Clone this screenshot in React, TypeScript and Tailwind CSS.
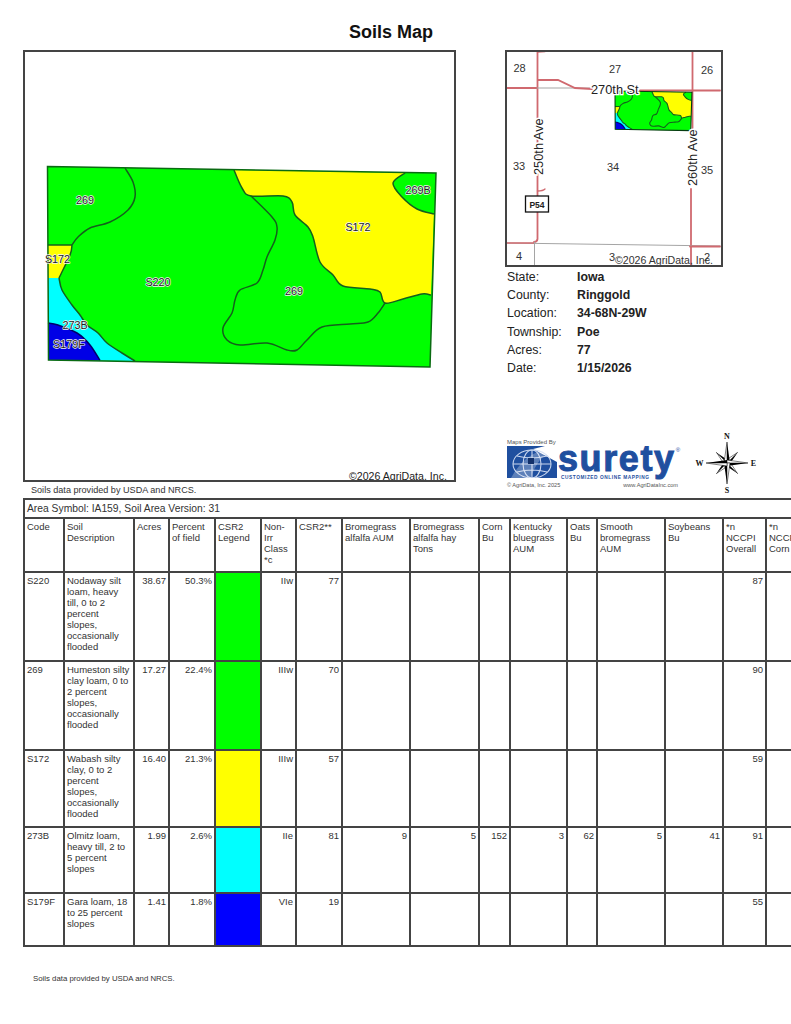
import React from "react";

type P = [number, number];

function smooth(points: P[]): string {
  let d = `M${points[0][0]},${points[0][1]}`;
  for (let i = 0; i < points.length - 1; i++) {
    const p0 = points[Math.max(i - 1, 0)];
    const p1 = points[i];
    const p2 = points[i + 1];
    const p3 = points[Math.min(i + 2, points.length - 1)];
    const c1x = p1[0] + (p2[0] - p0[0]) / 6;
    const c1y = p1[1] + (p2[1] - p0[1]) / 6;
    const c2x = p2[0] - (p3[0] - p1[0]) / 6;
    const c2y = p2[1] - (p3[1] - p1[1]) / 6;
    d += ` C${c1x.toFixed(1)},${c1y.toFixed(1)} ${c2x.toFixed(1)},${c2y.toFixed(1)} ${p2[0]},${p2[1]}`;
  }
  return d;
}

const notch: P[] = [[405, 173], [393, 183], [402, 197], [417, 209], [434, 214]];
const yellowEdge: P[] = [[431, 295], [422, 294], [403, 299], [385, 303], [380, 292], [370, 289], [343, 286], [333, 275], [320, 262], [313, 237], [308, 227], [295, 215], [292, 202], [283, 196], [251, 196], [242, 188], [234, 170]];
const inner: P[] = [[251, 196], [272, 217], [277, 227], [275, 240], [267, 257], [263, 270], [257, 283], [240, 290], [235, 300], [232, 313], [223, 328], [227, 340], [240, 345], [267, 343], [287, 350], [297, 350], [307, 340], [322, 327], [350, 324], [368, 322], [378, 313], [385, 303]];
const leftTop: P[] = [[125, 168], [133, 182], [135, 197], [128, 210], [110, 222], [90, 228], [78, 237], [72, 245]];
const smallYellow: P[] = [[72, 245], [70, 255], [59, 278]];
const cyanEdge: P[] = [[59, 278], [62, 290], [72, 305], [80, 315], [87, 325], [98, 333], [107, 343], [122, 353], [135, 361]];
const blueEdge: P[] = [[48, 323], [58, 325], [77, 333], [90, 345], [100, 360.5]];

function SoilShapes({ sw, outer }: { sw: number; outer: string }) {
  const line = "#14601c";
  return (
    <g>
      <path d="M47.5,166.5 L436,173 L430,367 L48.5,360 Z" fill="#00ff00" />
      <path d={`${smooth(notch)} L431,295 ${smooth(yellowEdge).replace("M", "L")} Z`} fill="#ffff00" />
      <path d="M48,245 L72,245 L70,255 L59,278 L48,278 Z" fill="#ffff00" />
      <path d={`${smooth(cyanEdge)} L48.5,360 L48,278 Z`} fill="#00ffff" />
      <path d={`${smooth(blueEdge)} L48.5,360 Z`} fill="#0000e6" />
      <g fill="none" stroke={line} strokeWidth={sw} strokeLinejoin="round">
        <path d={smooth(notch)} />
        <path d={smooth(yellowEdge)} />
        <path d={smooth(inner)} />
        <path d={smooth(leftTop)} />
        <path d={smooth(smallYellow)} />
        <path d={smooth(cyanEdge)} />
        <path d="M48,245 L72,245" />
      </g>
      <path d={smooth(blueEdge)} fill="none" stroke="#00006a" strokeWidth={sw} />
      <path d="M47.5,166.5 L436,173 L430,367 L48.5,360 Z" fill="none" stroke={outer} strokeWidth={sw} />
    </g>
  );
}

function MainMap() {
  const labels: [string, number, number][] = [
    ["269", 85, 204], ["269B", 418, 194], ["S172", 358, 231], ["S172", 57.5, 263],
    ["S220", 158, 286], ["269", 294, 295], ["273B", 75, 329], ["S179F", 69, 348],
  ];
  return (
    <svg viewBox="25 52 429 428" className="block w-full h-full">
      <SoilShapes sw={1.5} outer="#0a6a12" />
      {labels.map(([t, x, y], i) => (
        <text key={i} x={x} y={y} textAnchor="middle" fontSize="10.8" fill="#222" stroke="#f4f4f4" strokeWidth="1.3" paintOrder="stroke" strokeLinejoin="round" fontFamily="'Liberation Sans', sans-serif">{t}</text>
      ))}
      <text x="349" y="479.5" fontSize="10.6" fill="#222" fontFamily="'Liberation Sans', sans-serif">©2026 AgriData, Inc.</text>
    </svg>
  );
}

function Inset() {
  const red = "#d0696f";
  const grey = "#a5a5a5";
  const sec: [string, number, number][] = [
    ["28", 519.5, 73], ["27", 615, 74], ["26", 707, 75], ["33", 519, 171], ["34", 613, 172],
    ["35", 707, 175], ["4", 519, 261], ["3", 612, 262], ["2", 707, 262],
  ];
  const F = "'Liberation Sans', sans-serif";
  return (
    <svg viewBox="507 53 214 213" className="block w-full h-full">
      <g fill="none" strokeLinecap="round">
        <path d="M537.5,53 L537.5,240 Q537,243 534,243" stroke={red} strokeWidth="1.8" />
        <path d="M537.5,53 L545,52.5" stroke={red} strokeWidth="1.3" />
        <path d="M537.5,192 Q543,192 545,190" stroke={red} strokeWidth="1.3" />
        <path d="M507,89 L537,89" stroke={red} strokeWidth="1.8" />
        <path d="M537,89 L590,89" stroke={grey} strokeWidth="1" />
        <path d="M538,81 L558,81 L575,89 L592,90" stroke={red} strokeWidth="1.8" />
        <path d="M640,91.5 L720,91.5" stroke={red} strokeWidth="1.8" />
        <path d="M692.5,53 L692.5,130" stroke={red} strokeWidth="1.8" />
        <path d="M691,190 L691,266" stroke={red} strokeWidth="1.8" />
        <path d="M507,244 L720,247" stroke={grey} strokeWidth="1" />
        <path d="M507,244 L534,244" stroke={red} strokeWidth="1.3" />
        <path d="M690,247.5 L720,247.5" stroke={red} strokeWidth="1.8" />
        <path d="M534.5,243 L534.5,266" stroke={grey} strokeWidth="1" />
      </g>
      <g transform="translate(605.6,59) scale(0.198)">
        <SoilShapes sw={5.5} outer="#063d10" />
      </g>
      {sec.map(([t, x, y], i) => (
        <text key={i} x={x} y={y} textAnchor="middle" fontSize="11" fill="#333" fontFamily={F}>{t}</text>
      ))}
      <text x="591" y="95" fontSize="12.8" fill="#222" stroke="#fff" strokeWidth="2.5" paintOrder="stroke" fontFamily={F}>270th St</text>
      <text x="0" y="0" transform="translate(543,176) rotate(-90)" fontSize="12.8" fill="#222" stroke="#fff" strokeWidth="3" paintOrder="stroke" fontFamily={F}>250th Ave</text>
      <text x="0" y="0" transform="translate(697,187) rotate(-90)" fontSize="12.8" fill="#222" stroke="#fff" strokeWidth="3" paintOrder="stroke" fontFamily={F}>260th Ave</text>
      <rect x="525.5" y="197" width="23" height="16" fill="#fff" stroke="#111" strokeWidth="1.3" />
      <text x="537" y="208.5" textAnchor="middle" fontSize="8.5" fontWeight="700" fill="#222" fontFamily={F}>P54</text>
      <text x="615" y="265" fontSize="10.6" fill="#333" fontFamily={F}>©2026 AgriData, Inc.</text>
    </svg>
  );
}

function GlobeMark() {
  return (
    <svg viewBox="0 0 50 32" className="block w-[50px] h-[32px] shrink-0">
      <path d="M0,0 L38,0 Q30,2 26,3 L50,16 L50,32 L0,32 Z" fill="#1f4f9f" />
      <path d="M50,0 L50,14 L40,3 Z" fill="#fff" />
      <g fill="none" stroke="#c9d6ee" strokeWidth="1.1">
        <ellipse cx="25" cy="18" rx="19" ry="14" />
        <ellipse cx="25" cy="18" rx="9" ry="14" />
        <path d="M25,4 L25,32 M6,18 L44,18 M10,10 Q25,14 40,10 M10,26 Q25,22 40,26" />
      </g>
      <path d="M4,32 Q18,6 44,2 L50,2 Q30,10 24,32 Z" fill="#fff" opacity="0.28" />
      <rect x="21" y="12" width="6" height="6" fill="#12306a" />
    </svg>
  );
}

function Compass() {
  const pts: [number, number, number, number][] = [];
  const star = (angle: number, r: number, w: number) => {
    const a = (angle * Math.PI) / 180;
    pts.push([Math.sin(a) * r, -Math.cos(a) * r, Math.cos(a) * w, Math.sin(a) * w]);
  };
  [45, 135, 225, 315].forEach((a) => star(a, 15, 3));
  [0, 90, 180, 270].forEach((a) => star(a, 21, 3));
  return (
    <svg viewBox="-32 -30 64 60" className="block w-[64px] h-[60px]">
      {pts.map(([tx, ty, lx, ly], i) => (
        <g key={i}>
          <path d={`M0,0 L${tx},${ty} L${lx},${ly} Z`} fill="#000" />
          <path d={`M0,0 L${tx},${ty} L${-lx},${-ly} Z`} fill="#fff" stroke="#000" strokeWidth="0.5" />
        </g>
      ))}
      <g fontFamily="'Liberation Serif', serif" fontWeight="700" fontSize="8" fill="#111" textAnchor="middle">
        <text x="0" y="-24.5">N</text>
        <text x="0" y="29.5">S</text>
        <text x="-27.5" y="3">W</text>
        <text x="26.5" y="3">E</text>
      </g>
    </svg>
  );
}

const colWidths = [40, 70, 35, 46, 46, 35, 46, 68, 69, 31, 57, 30, 68, 58, 43, 64];
const headers = [
  "Code", "Soil\nDescription", "Acres", "Percent\nof field", "CSR2\nLegend", "Non-\nIrr\nClass\n*c", "CSR2**",
  "Bromegrass\nalfalfa AUM", "Bromegrass\nalfalfa hay\nTons", "Corn\nBu", "Kentucky\nbluegrass\nAUM", "Oats\nBu",
  "Smooth\nbromegrass\nAUM", "Soybeans\nBu", "*n\nNCCPI\nOverall", "*n\nNCCPI\nCorn",
];

type Row = {
  h: string; code: string; desc: string; acres: string; pct: string; swatch: string; cls: string; csr: string;
  extra: string[]; nccpi: string;
};
const rows: Row[] = [
  { h: "h-[89px]", code: "S220", desc: "Nodaway silt\nloam, heavy\ntill, 0 to 2\npercent\nslopes,\noccasionally\nflooded", acres: "38.67", pct: "50.3%", swatch: "bg-[#00ff00]", cls: "IIw", csr: "77", extra: ["", "", "", "", "", "", ""], nccpi: "87" },
  { h: "h-[89px]", code: "269", desc: "Humeston silty\nclay loam, 0 to\n2 percent\nslopes,\noccasionally\nflooded", acres: "17.27", pct: "22.4%", swatch: "bg-[#00ff00]", cls: "IIIw", csr: "70", extra: ["", "", "", "", "", "", ""], nccpi: "90" },
  { h: "h-[77px]", code: "S172", desc: "Wabash silty\nclay, 0 to 2\npercent\nslopes,\noccasionally\nflooded", acres: "16.40", pct: "21.3%", swatch: "bg-[#ffff00]", cls: "IIIw", csr: "57", extra: ["", "", "", "", "", "", ""], nccpi: "59" },
  { h: "h-[66px]", code: "273B", desc: "Olmitz loam,\nheavy till, 2 to\n5 percent\nslopes", acres: "1.99", pct: "2.6%", swatch: "bg-[#00ffff]", cls: "IIe", csr: "81", extra: ["9", "5", "152", "3", "62", "5", "41"], nccpi: "91" },
  { h: "h-[53px]", code: "S179F", desc: "Gara loam, 18\nto 25 percent\nslopes", acres: "1.41", pct: "1.8%", swatch: "bg-[#0000ff]", cls: "VIe", csr: "19", extra: ["", "", "", "", "", "", ""], nccpi: "55" },
];

const cell = "border-2 border-[#444] align-top px-[2px] pt-[2px] pb-0 leading-[11px]";
const num = `${cell} text-right`;

export default function App() {
  return (
    <div className="w-[791px] h-[1024px] overflow-hidden bg-white text-black font-['Liberation_Sans',Arial,sans-serif]">
      <h1 className="w-[782px] pt-[22px] text-center text-[18px] leading-[21px] font-bold text-[#111]">Soils Map</h1>

      <div className="flex mt-[7px] ml-[23px]">
        <div className="w-[433px] flex flex-col">
          <div className="w-[433px] h-[432px] border-2 border-[#444]">
            <MainMap />
          </div>
          <p className="ml-[8px] mt-[2px] text-[9.1px] leading-[12px] text-[#333]">Soils data provided by USDA and NRCS.</p>
        </div>

        <div className="ml-[49px] w-[286px] flex flex-col">
          <div className="w-[218px] h-[217px] border-2 border-[#444]">
            <Inset />
          </div>
          <dl className="grid grid-cols-[70px_1fr] ml-[2px] mt-[1px] text-[12.3px] auto-rows-[18.2px] leading-[18px] text-[#222]">
            <dt>State:</dt><dd className="font-bold">Iowa</dd>
            <dt>County:</dt><dd className="font-bold">Ringgold</dd>
            <dt>Location:</dt><dd className="font-bold">34-68N-29W</dd>
            <dt>Township:</dt><dd className="font-bold">Poe</dd>
            <dt>Acres:</dt><dd className="font-bold">77</dd>
            <dt>Date:</dt><dd className="font-bold">1/15/2026</dd>
          </dl>
          <div className="flex items-start ml-[2px] mt-[61px]">
            <div className="w-[176px] shrink-0 flex flex-col">
              <span className="text-[6px] leading-[8px] text-[#555]">Maps Provided By</span>
              <div className="flex h-[32px]">
                <GlobeMark />
                <span className="ml-[1px] -mt-[5px] text-[36px] leading-[36px] font-bold text-[#1f4f9f] tracking-[1.6px] [-webkit-text-stroke:1px_#1f4f9f]">surety</span>
                <span className="text-[6px] leading-[8px] text-[#1f4f9f]">®</span>
              </div>
              <span className="ml-[54px] -mt-[3px] text-[4.8px] leading-[6px] font-bold tracking-[0.55px] text-[#1f4f9f]">CUSTOMIZED ONLINE MAPPING</span>
              <div className="flex justify-between w-[171px] text-[5.6px] leading-[8px] text-[#555]">
                <span>© AgriData, Inc. 2025</span>
                <span>www.AgriDataInc.com</span>
              </div>
            </div>
            <div className="ml-[12px] -mt-[5px]"><Compass /></div>
          </div>
        </div>
      </div>

      <div className="mt-[2px] ml-[23px] w-[806px]">
        <table className="table-fixed border-collapse w-[806px] text-[9.5px] text-[#333]">
          <colgroup>
            {colWidths.map((w, i) => (
              <col key={i} style={{ width: w }} />
            ))}
          </colgroup>
          <tbody>
            <tr className="h-[19px]">
              <td colSpan={16} className="border-2 border-[#444] px-[2px] text-[10.3px] leading-[12px] align-middle">Area Symbol: IA159, Soil Area Version: 31</td>
            </tr>
            <tr className="h-[54px]">
              {headers.map((h, i) => (
                <td key={i} className={`${cell} whitespace-pre-line`}>{h}</td>
              ))}
            </tr>
            {rows.map((r) => (
              <tr key={r.code} className={r.h}>
                <td className={cell}>{r.code}</td>
                <td className={`${cell} whitespace-pre-line`}>{r.desc}</td>
                <td className={num}>{r.acres}</td>
                <td className={num}>{r.pct}</td>
                <td className={`border-2 border-[#444] ${r.swatch}`} />
                <td className={num}>{r.cls}</td>
                <td className={num}>{r.csr}</td>
                {r.extra.map((v, i) => (
                  <td key={i} className={num}>{v}</td>
                ))}
                <td className={num}>{r.nccpi}</td>
                <td className={num} />
              </tr>
            ))}
          </tbody>
        </table>
      </div>

      <p className="ml-[33px] mt-[27px] text-[7.8px] leading-[10px] text-[#333]">Soils data provided by USDA and NRCS.</p>
    </div>
  );
}
